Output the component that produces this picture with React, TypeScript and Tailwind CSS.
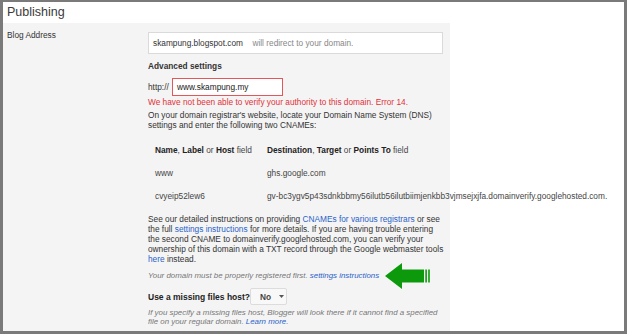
const linkCls = "text-[#2a62c9]";

function GreenArrow() {
  return (
    <svg width="45" height="26" viewBox="0 0 45 26" className="ml-[6px] shrink-0">
      <polygon points="0,13 17,0 17,6.5 39,6.5 39,19.5 17,19.5 17,26" fill="#0c9a0c" />
      <rect x="40.3" y="6.5" width="1.6" height="13" fill="#0c9a0c" />
      <rect x="43.2" y="6.5" width="1.6" height="13" fill="#0c9a0c" />
    </svg>
  );
}

function CnameTable() {
  const rows = [
    ["www", "ghs.google.com"],
    [
      "cvyeip52lew6",
      "gv-bc3ygv5p43sdnkbbmy56ilutb56ilutbiimjenkbb3vjmsejxjfa.domainverify.googlehosted.com.",
    ],
  ];
  return (
    <div className="mt-[8px] flex flex-col">
      <div className="flex h-[23px] items-center pl-[7px] text-[#444]">
        <span className="w-[112px] shrink-0 whitespace-nowrap">
          <b className="text-[#222]">Name</b>, <b className="text-[#222]">Label</b> or{" "}
          <b className="text-[#222]">Host</b> field
        </span>
        <span className="whitespace-nowrap">
          <b className="text-[#222]">Destination</b>, <b className="text-[#222]">Target</b> or{" "}
          <b className="text-[#222]">Points To</b> field
        </span>
      </div>
      {rows.map(([name, dest]) => (
        <div key={name} className="flex h-[23px] items-center pl-[7px] text-[#444]">
          <span className="w-[112px] shrink-0 whitespace-nowrap">{name}</span>
          <span className="whitespace-nowrap">{dest}</span>
        </div>
      ))}
    </div>
  );
}

export default function App() {
  return (
    <div className="h-[335px] w-[630px] bg-white font-['Liberation_Sans',Arial,sans-serif]">
      <div className="flex h-[334px] w-[627px] flex-col border-b-[3px] border-l-[3px] border-r-[3px] border-t-2 border-[#7a7a7a] bg-white">
        <div className="flex h-[21px] shrink-0 items-center pl-[4px] text-[12.5px] text-[#3a3a3a]">
          Publishing
        </div>

        <div className="flex flex-1">
          <div className="flex w-[447px] shrink-0 bg-[#f4f4f4] text-[8.3px] leading-[10px]">
            <div className="w-[145px] shrink-0 pl-[4px] pt-[7px] text-[#333]">Blog Address</div>

            <div className="flex w-[295px] shrink-0 flex-col text-[#333]">
              <div className="mt-[9px] flex h-[22px] items-center border border-[#dadada] bg-white pl-[4px]">
                <span className="text-[#333]">skampung.blogspot.com</span>
                <span className="ml-[9.5px] text-[#888]">will redirect to your domain.</span>
              </div>

              <div className="mt-[7px] font-bold text-[#333]">Advanced settings</div>

              <div className="mt-[7px] flex items-center">
                <span className="w-[24px]">http://</span>
                <div className="flex h-[18px] w-[111px] items-center border border-[#e2585a] bg-white pl-[4px] text-[#222]">
                  www.skampung.my
                </div>
              </div>

              <div className="mt-[1px] whitespace-nowrap text-[#e2323a]">
                We have not been able to verify your authority to this domain. Error 14.
              </div>

              <div className="mt-[3px] whitespace-nowrap text-[#333]">
                On your domain registrar's website, locate your Domain Name System (DNS)
                <br />
                settings and enter the following two CNAMEs:
              </div>

              <CnameTable />

              <div className="mt-[7px] whitespace-nowrap text-[#333]">
                See our detailed instructions on providing{" "}
                <span className={linkCls}>CNAMEs for various registrars</span> or see
                <br />
                the full <span className={linkCls}>settings instructions</span> for more details. If you are having trouble entering
                <br />
                the second CNAME to domainverify.googlehosted.com, you can verify your
                <br />
                ownership of this domain with a TXT record through the Google webmaster tools
                <br />
                <span className={linkCls}>here</span> instead.
              </div>

              <div className="mt-[7px] flex h-[10px] items-center whitespace-nowrap text-[7.9px] italic text-[#777]">
                <span>
                  Your domain must be properly registered first.{" "}
                  <span className={linkCls}>settings instructions</span>
                </span>
                <GreenArrow />
              </div>

              <div className="mt-[7px] flex h-[17px] items-center">
                <span className="w-[102px] whitespace-nowrap text-[8.5px] font-bold text-[#222]">
                  Use a missing files host?
                </span>
                <div className="flex h-[17px] w-[37px] items-center rounded-[2px] border border-[#dcdcdc] bg-[#f8f8f8] pl-[9px] text-[#444]">
                  <span className="font-bold">No</span>
                  <svg width="5" height="3" viewBox="0 0 5 3" className="ml-[8px]">
                    <polygon points="0,0 5,0 2.5,3" fill="#555" />
                  </svg>
                </div>
              </div>

              <div className="mt-[2.5px] whitespace-nowrap text-[7.9px] leading-[9px] italic text-[#777]">
                If you specify a missing files host, Blogger will look there if it cannot find a specified
                <br />
                file on your regular domain. <span className={linkCls}>Learn more.</span>
              </div>
            </div>
          </div>
        </div>
      </div>
    </div>
  );
}
